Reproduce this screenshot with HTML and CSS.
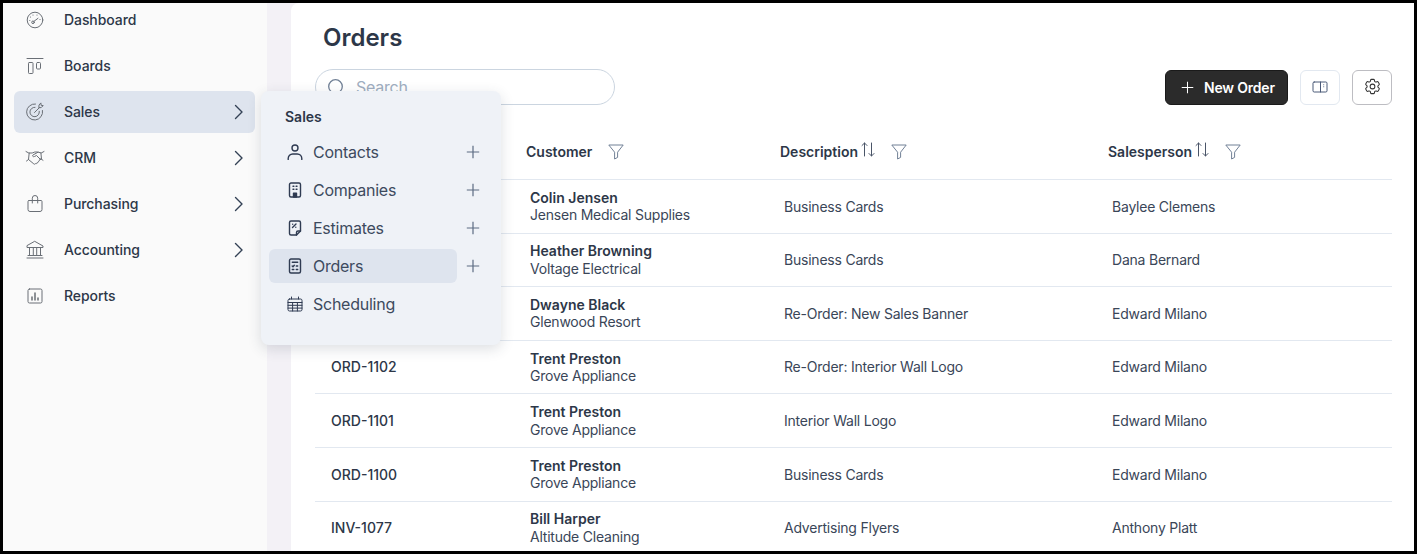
FILE: index.html
```html
<!DOCTYPE html>
<html lang="en">
<head>
<meta charset="utf-8">
<title>Orders</title>
<link rel="stylesheet" href="styles.css">
</head>
<body>
<svg class="defs" width="0" height="0" aria-hidden="true">
  <defs>
    <symbol id="chev" viewBox="0 0 16 16"><path d="M5.500 1.500 12 8l-6.500 6.500"/></symbol>
    <symbol id="plus" viewBox="0 0 14 14"><path d="M7 .8v12.400M.8 7h12.400"/></symbol>
    <symbol id="filter" viewBox="0 0 16 16"><path d="M.8 1h14.400L9.600 8.200v5.200L6.600 15V8.200z"/></symbol>
    <symbol id="sort" viewBox="0 0 14 14"><path d="M3.500 13.500V.5M1 3 3.500.5 6 3M10.500.5v13M8 11l2.500 2.500L13 11"/></symbol>
  </defs>
</svg>
<div class="frame">
  <aside class="sidebar">
    <nav class="nav">
      <a class="nav-item">
        <svg class="nav-icon" viewBox="0 0 20 20"><circle cx="10" cy="10" r="7.800"/><path d="m9 11.300 4-3"/><circle cx="8" cy="12.300" r="1.300"/><path class="dots" d="M4.800 10.500h.01M5.500 7h.01M8 5h.01M12 5h.01M15 9.500h.01"/></svg>
        <span class="nav-label">Dashboard</span>
      </a>
      <a class="nav-item">
        <svg class="nav-icon" viewBox="0 0 20 20"><path d="M2 2.500h16"/><rect x="3.500" y="6.500" width="4.500" height="11" rx=".8"/><rect x="11.500" y="6.500" width="4" height="6.500" rx="1"/></svg>
        <span class="nav-label">Boards</span>
      </a>
      <a class="nav-item active">
        <svg class="nav-icon" viewBox="0 0 20 20"><path d="M17.500 8.500A8 8 0 1 1 10.500 2"/><path d="M14.300 9.300a4.700 4.700 0 1 1-4.300-4"/><path d="m9.500 10.500 5-5M14 3.400l-.2 2.300 2.400-.1 2-2-2.100-.3-.2-2z"/></svg>
        <span class="nav-label">Sales</span>
        <svg class="chev"><use href="#chev"/></svg>
      </a>
      <a class="nav-item">
        <svg class="nav-icon" viewBox="0 0 20 20"><path d="M1 3.500 3.800 5h3.400l2.600-1h2.900l3.500 1L19 3.500"/><path d="M13 4.200 8 7c-1 .7 0 2.300 1.500 1.500l2-1 4.200 4.200"/><path d="M1.500 13l2-1.500 5.300 4.400c.8.600 1.500.2 1.700-.3.8.400 1.700-.2 1.600-1 .9.200 1.600-.6 1.300-1.400.9 0 1.400-.7 1.200-1.600l1.100-.9 2.300 1.600"/><path d="M3.500 11.500 4.200 5M16.500 11 15.900 5"/></svg>
        <span class="nav-label">CRM</span>
        <svg class="chev"><use href="#chev"/></svg>
      </a>
      <a class="nav-item">
        <svg class="nav-icon" viewBox="0 0 20 20"><path d="M4 6.500h12a1 1 0 0 1 1 1v8a2 2 0 0 1-2 2H5a2 2 0 0 1-2-2v-8a1 1 0 0 1 1-1z"/><path d="M7.300 9V4.200a2.700 2.700 0 0 1 5.400 0V9"/></svg>
        <span class="nav-label">Purchasing</span>
        <svg class="chev"><use href="#chev"/></svg>
      </a>
      <a class="nav-item">
        <svg class="nav-icon" viewBox="0 0 20 20"><path d="M10 1.500 18 6v1.500H2V6zM4.500 8v7M8.300 8v7M11.700 8v7M15.500 8v7M3 15.500h14M2 18h16"/></svg>
        <span class="nav-label">Accounting</span>
        <svg class="chev"><use href="#chev"/></svg>
      </a>
      <a class="nav-item">
        <svg class="nav-icon" viewBox="0 0 20 20"><rect x="3" y="3" width="14" height="14" rx="1.500"/><path class="bars" d="M7 14v-3M10 14V7M13 14v-2"/></svg>
        <span class="nav-label">Reports</span>
      </a>
    </nav>
  </aside>

  <div class="gutter">
    <main class="main">
      <h1 class="title">Orders</h1>
      <div class="toolbar">
        <div class="search">
          <svg class="search-icon" viewBox="0 0 18 18"><circle cx="8.500" cy="8.500" r="6.800"/><path d="m13.500 13.500 3.500 3.500"/></svg>
          <span class="search-text">Search</span>
        </div>
        <div class="actions">
          <button class="btn-primary">
            <svg class="btn-plus"><use href="#plus"/></svg>
            New Order
          </button>
          <button class="btn-icon light">
            <svg class="tool-icon" viewBox="0 0 16 16"><rect x="1" y="3" width="14" height="10" rx="1.200"/><path d="M8.500 3v10M11.700 5.800v.01M11.700 7.800v.01"/></svg>
          </button>
          <button class="btn-icon strong">
            <svg class="gear-icon" viewBox="0 0 24 24"><path d="M9.594 3.940c.09-.542.56-.94 1.110-.94h2.593c.55 0 1.020.398 1.110.94l.213 1.281c.063.374.313.686.645.870.074.040.147.083.220.127.325.196.720.257 1.075.124l1.217-.456a1.125 1.125 0 0 1 1.370.490l1.296 2.247a1.125 1.125 0 0 1-.260 1.431l-1.003.827c-.293.241-.438.613-.430.992a7.723 7.723 0 0 1 0 .255c-.008.378.137.750.430.991l1.004.827c.424.350.534.955.260 1.430l-1.298 2.247a1.125 1.125 0 0 1-1.369.491l-1.217-.456c-.355-.133-.750-.072-1.076.124a6.470 6.470 0 0 1-.220.128c-.331.183-.581.495-.644.869l-.213 1.281c-.09.543-.56.940-1.110.940h-2.594c-.55 0-1.019-.398-1.110-.940l-.213-1.281c-.062-.374-.312-.686-.644-.870a6.520 6.520 0 0 1-.220-.127c-.325-.196-.720-.257-1.076-.124l-1.217.456a1.125 1.125 0 0 1-1.369-.490l-1.297-2.247a1.125 1.125 0 0 1 .260-1.431l1.004-.827c.292-.240.437-.613.430-.991a6.932 6.932 0 0 1 0-.255c.007-.380-.138-.751-.430-.992l-1.004-.827a1.125 1.125 0 0 1-.260-1.430l1.297-2.247a1.125 1.125 0 0 1 1.370-.491l1.216.456c.356.133.751.072 1.076-.124.072-.044.146-.086.220-.128.332-.183.582-.495.644-.869l.214-1.280z"/><circle cx="12" cy="12" r="3"/></svg>
          </button>
        </div>
      </div>

      <table class="orders">
        <colgroup><col class="c1"><col class="c2"><col class="c3"><col class="c4"></colgroup>
        <thead>
          <tr>
            <th></th>
            <th><div class="th-in"><span>Customer</span><svg class="filter"><use href="#filter"/></svg></div></th>
            <th><div class="th-in"><span>Description</span><svg class="sort"><use href="#sort"/></svg><svg class="filter"><use href="#filter"/></svg></div></th>
            <th><div class="th-in"><span>Salesperson</span><svg class="sort"><use href="#sort"/></svg><svg class="filter"><use href="#filter"/></svg></div></th>
          </tr>
        </thead>
        <tbody>
          <tr><td class="id"></td><td><b>Colin Jensen</b><span>Jensen Medical Supplies</span></td><td>Business Cards</td><td>Baylee Clemens</td></tr>
          <tr><td class="id"></td><td><b>Heather Browning</b><span>Voltage Electrical</span></td><td>Business Cards</td><td>Dana Bernard</td></tr>
          <tr><td class="id"></td><td><b>Dwayne Black</b><span>Glenwood Resort</span></td><td>Re-Order: New Sales Banner</td><td>Edward Milano</td></tr>
          <tr><td class="id">ORD-1102</td><td><b>Trent Preston</b><span>Grove Appliance</span></td><td>Re-Order: Interior Wall Logo</td><td>Edward Milano</td></tr>
          <tr><td class="id">ORD-1101</td><td><b>Trent Preston</b><span>Grove Appliance</span></td><td>Interior Wall Logo</td><td>Edward Milano</td></tr>
          <tr><td class="id">ORD-1100</td><td><b>Trent Preston</b><span>Grove Appliance</span></td><td>Business Cards</td><td>Edward Milano</td></tr>
          <tr><td class="id">INV-1077</td><td><b>Bill Harper</b><span>Altitude Cleaning</span></td><td>Advertising Flyers</td><td>Anthony Platt</td></tr>
        </tbody>
      </table>
    </main>
  </div>

  <div class="popup">
    <div class="popup-title">Sales</div>
    <ul class="popup-list">
      <li class="popup-row">
        <a class="popup-link">
          <svg class="pop-icon" viewBox="0 0 16 16"><circle cx="8" cy="4" r="3"/><path d="M1.200 15.500V14.500a4.500 4.500 0 0 1 4.500-4.500h4.600a4.500 4.500 0 0 1 4.500 4.500v1"/></svg>
          <span>Contacts</span>
        </a>
        <svg class="pop-plus"><use href="#plus"/></svg>
      </li>
      <li class="popup-row">
        <a class="popup-link">
          <svg class="pop-icon" viewBox="0 0 16 16"><rect x="2.500" y="1" width="11" height="14" rx="1.500"/><path class="heavy" d="M6 4.300h.9M9.100 4.300h.9M6 7.300h.9M9.100 7.300h.9"/><path class="fill" d="M6.500 15v-3.800h3V15z"/></svg>
          <span>Companies</span>
        </a>
        <svg class="pop-plus"><use href="#plus"/></svg>
      </li>
      <li class="popup-row">
        <a class="popup-link">
          <svg class="pop-icon" viewBox="0 0 16 16"><path d="M9.500 15H4a1.500 1.500 0 0 1-1.500-1.500v-11A1.500 1.500 0 0 1 4 1h8a1.500 1.500 0 0 1 1.500 1.500V11z"/><path d="M9.500 15v-2.500A1.500 1.500 0 0 1 11 11h2.500M5.500 7.500l3.500-3.500M5.700 4.200h.01M8.800 7.300h.01"/></svg>
          <span>Estimates</span>
        </a>
        <svg class="pop-plus"><use href="#plus"/></svg>
      </li>
      <li class="popup-row">
        <a class="popup-link current">
          <svg class="pop-icon" viewBox="0 0 16 16"><rect x="2.500" y="1" width="11" height="14" rx="1.500"/><path d="M5.300 4.300h5.400M5.200 8l.8.800 1.300-1.500M9.300 8h1.400M5.300 11.500h1.500M9.300 11.500h1.400"/></svg>
          <span>Orders</span>
        </a>
        <svg class="pop-plus"><use href="#plus"/></svg>
      </li>
      <li class="popup-row">
        <a class="popup-link">
          <svg class="pop-icon thin" viewBox="0 0 16 16"><rect x="1" y="3" width="14" height="12" rx="1.500"/><path d="M4.500 1v2M11.500 1v2M1 6.500h14M1 9.300h14M1 12.100h14M5.600 6.500V15M10.400 6.500V15"/></svg>
          <span>Scheduling</span>
        </a>
      </li>
    </ul>
  </div>
</div>
</body>
</html>
```

FILE: styles.css
```css
* { box-sizing: border-box; }
html, body { margin: 0; height: 100%; }
body { font-family: Inter, "Liberation Sans", sans-serif; color: #2d3748; background: #000; overflow: hidden; }
.defs { position: absolute; }

.frame {
  position: relative;
  display: flex;
  height: 554px;
  border: 3px solid #000;
  background: #f3f1f6;
  overflow: hidden;
}

/* Sidebar */
.sidebar { width: 264px; flex: none; background: #fafafa; }
.nav { display: flex; flex-direction: column; gap: 4px; margin-top: -4px; padding: 0 12px 0 11px; }
.nav-item {
  display: flex;
  align-items: center;
  height: 42px;
  padding: 0 9px 0 11px;
  border-radius: 6px;
  font-size: 14px;
  font-weight: 500;
  color: #2d3748;
}
.nav-item.active { background: #dee4ee; }
.nav-icon { width: 20px; height: 20px; flex: none; margin-right: 19px; fill: none; stroke: #6a6f76; stroke-width: 1; stroke-linecap: round; stroke-linejoin: round; }
.nav-icon .dots { stroke-width: 1.200; }
.nav-icon .bars { stroke-width: 1.500; }
.nav-label { flex: 1; padding-bottom: 2px; letter-spacing: -.08px; }
.chev { width: 16px; height: 16px; fill: none; stroke: #334155; stroke-width: 1.400; stroke-linecap: round; stroke-linejoin: round; }

/* Main panel */
.gutter { flex: 1; min-width: 0; padding-left: 24px; }
.main { height: 100%; background: #fff; border-top-left-radius: 8px; padding: 19px 22px 0 24px; }
.title { margin: 0 0 15px 8px; font-size: 24px; line-height: 32px; font-weight: 600; color: #2d3748; }

.toolbar { display: flex; justify-content: space-between; align-items: flex-start; }
.search {
  display: flex;
  align-items: center;
  width: 300px;
  height: 36px;
  padding-left: 11px;
  border: 1px solid #cbd5e0;
  border-radius: 18px;
}
.search-icon { width: 18px; height: 18px; fill: none; stroke: #718096; stroke-width: 1.300; stroke-linecap: round; margin-right: 11px; }
.search-text { font-size: 16px; letter-spacing: -.25px; color: #a0aec0; }

.actions { display: flex; gap: 12px; padding-top: 1px; }
.btn-primary {
  display: flex;
  align-items: center;
  gap: 10px;
  width: 123px;
  height: 35px;
  padding: 0 0 0 15px;
  background: #2b2b2b;
  border: 1px solid #1a1a1a;
  border-radius: 6px;
  color: #fff;
  font: 600 14px Inter, "Liberation Sans", sans-serif;
  letter-spacing: -.2px;
}
.btn-plus { width: 13px; height: 13px; fill: none; stroke: #fff; stroke-width: 1.100; }
.btn-icon {
  display: flex;
  align-items: center;
  justify-content: center;
  width: 40px;
  height: 35px;
  padding: 0 0 2px;
  background: #fff;
  border-radius: 6px;
}
.btn-icon.light { border: 1px solid #e2e8f0; }
.btn-icon.strong { border: 1px solid #bdbdc2; }
.tool-icon { width: 16px; height: 16px; fill: none; stroke: #4a5a78; stroke-width: 1; stroke-linejoin: round; stroke-linecap: round; }
.gear-icon { width: 19px; height: 19px; fill: none; stroke: #333; stroke-width: 1.300; stroke-linejoin: round; stroke-linecap: round; }

/* Table */
.orders { width: 1077px; margin-top: 20px; border-collapse: separate; border-spacing: 0; table-layout: fixed; font-size: 14px; }
.c1 { width: 199px; }
.c2 { width: 254px; }
.c3 { width: 328px; }
.c4 { width: 296px; }
.orders th { height: 55px; padding: 0 0 1px 12px; border-bottom: 1px solid #e2e8f0; text-align: left; font-weight: 600; }
.th-in { display: flex; align-items: center; }
.filter { width: 16px; height: 16px; margin-left: 16px; fill: none; stroke: #718096; stroke-width: 1; stroke-linejoin: round; }
.sort { width: 14px; height: 15px; margin: -4px 0 0 3px; fill: none; stroke: #4a5568; stroke-width: 1; stroke-linecap: round; stroke-linejoin: round; }
.orders td { height: 53.600px; padding: 0 0 0 16px; border-bottom: 1px solid #e2e8f0; line-height: 17.500px; color: #3a4658; letter-spacing: -.22px; }
.orders td.id { font-weight: 500; color: #2d3748; letter-spacing: 0; }
.orders td b { display: block; font-weight: 600; color: #2d3748; letter-spacing: 0; }
.orders td span { display: block; }

/* Flyout */
.popup {
  position: absolute;
  left: 258px;
  top: 88px;
  width: 240px;
  height: 254px;
  padding: 16px 8px 0;
  background: #eff2f7;
  border-radius: 8px;
  box-shadow: 0 4px 14px rgba(45, 55, 72, .16);
}
.popup-title { padding-left: 16px; font-size: 14px; line-height: 20px; font-weight: 600; color: #2d3748; }
.popup-list { list-style: none; margin: 8px 0 0; padding: 0; display: flex; flex-direction: column; gap: 4px; }
.popup-row { display: flex; align-items: center; height: 34px; }
.popup-link {
  display: flex;
  align-items: center;
  width: 188px;
  height: 34px;
  padding-left: 18px;
  border-radius: 6px;
  font-size: 16px;
  letter-spacing: -.25px;
  color: #3d4a5e;
}
.popup-link.current { background: #dee4ee; }
.pop-icon { width: 16px; height: 16px; flex: none; margin-right: 10px; fill: none; stroke: #2f3b52; stroke-width: 1.400; stroke-linecap: round; stroke-linejoin: round; }
.pop-icon.thin { stroke-width: 1; }
.pop-icon .fill { fill: #2f3b52; }
.pop-plus { width: 14px; height: 14px; margin-left: 9px; fill: none; stroke: #5c6b82; stroke-width: 1.200; }
```
